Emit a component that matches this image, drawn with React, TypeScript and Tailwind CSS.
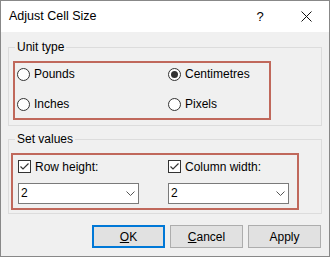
import React from 'react';

const font = { fontFamily: '"Liberation Sans", Arial, sans-serif' };

function Radio({ label, checked, wide }: { label: string; checked?: boolean; wide?: boolean }) {
    return (
        <div className={wide ? 'flex items-center h-[20px] w-[151px] shrink-0' : 'flex items-center h-[20px]'}>
            <span className="w-[13px] h-[13px] shrink-0 rounded-full border border-[#333] bg-white flex items-center justify-center">
                {checked && <span className="w-[7px] h-[7px] rounded-full bg-[#333]" />}
            </span>
            <span className="ml-[4px]">{label}</span>
        </div>
    );
}

function Check({ label }: { label: string }) {
    return (
        <div className="flex items-center h-[13px]">
            <span className="w-[13px] h-[13px] shrink-0 border border-[#333] bg-white flex items-center justify-center">
                <svg width="11" height="11" viewBox="0 0 11 11">
                    <path d="M1.5 5.5 L4 8 L9.5 2.5" fill="none" stroke="#333" strokeWidth="1.2" />
                </svg>
            </span>
            <span className="ml-[4px]">{label}</span>
        </div>
    );
}

function Combo() {
    return (
        <div className="w-[121px] h-[21px] border border-[#7a7a7a] bg-white flex items-center justify-between pl-[2px] pr-[3px] mt-[10px]">
            <span className="text-[#000] leading-none -mt-[2px]">2</span>
            <svg width="9" height="5" viewBox="0 0 9 5">
                <path d="M0.5 0.5 L4.5 4.5 L8.5 0.5" fill="none" stroke="#555" strokeWidth="1" />
            </svg>
        </div>
    );
}

export default function App() {
    return (
        <div className="w-[330px] h-[257px] border border-[#888] bg-[#f0f0f0] flex flex-col text-[12px] text-black" style={font}>
            {/* Title bar */}
            <div className="h-[31px] bg-white flex items-center justify-between">
                <span className="pl-[8px] text-[12.5px]">Adjust Cell Size</span>
                <div className="flex h-full">
                    <div className="w-[46px] h-full flex items-center justify-center text-[13px]">?</div>
                    <div className="w-[46px] h-full flex items-center justify-center">
                        <svg width="11" height="11" viewBox="0 0 11 11">
                            <path d="M0.5 0.5 L10.5 10.5 M10.5 0.5 L0.5 10.5" stroke="#111" strokeWidth="1" />
                        </svg>
                    </div>
                </div>
            </div>

            {/* Unit type */}
            <fieldset className="mx-[7px] mt-[8px] border border-[#dcdcdc]">
                <legend className="ml-[6px] px-[2px] leading-[14px]">Unit type</legend>
                <div className="ml-[4px] mt-[7px] mb-[5px] w-[258px] h-[59px] border-2 border-[#c0685b] pl-[2px] pt-[1px] flex flex-col gap-[10px]">
                    <div className="flex">
                        <Radio label="Pounds" wide />
                        <Radio label="Centimetres" checked />
                    </div>
                    <div className="flex">
                        <Radio label="Inches" wide />
                        <Radio label="Pixels" />
                    </div>
                </div>
            </fieldset>

            {/* Set values */}
            <fieldset className="mx-[7px] mt-[6px] border border-[#dcdcdc]">
                <legend className="ml-[6px] px-[2px] leading-[14px]">Set values</legend>
                <div className="ml-[2px] mt-[7px] mb-[3px] w-[288px] h-[57px] border-2 border-[#c0685b] pl-[5px] pt-[5px] flex">
                    <div className="w-[150px] shrink-0">
                        <Check label="Row height:" />
                        <Combo />
                    </div>
                    <div>
                        <Check label="Column width:" />
                        <Combo />
                    </div>
                </div>
            </fieldset>

            {/* Buttons */}
            <div className="mt-[11px] pr-[8px] flex justify-end gap-[5px]">
                <button className="w-[73px] h-[23px] border-2 border-[#0078d7] bg-[#e1e1e1]">
                    <span className="underline">O</span>K
                </button>
                <button className="w-[73px] h-[23px] border border-[#adadad] bg-[#e1e1e1]">
                    <span className="underline">C</span>ancel
                </button>
                <button className="w-[73px] h-[23px] border border-[#adadad] bg-[#e1e1e1]">Apply</button>
            </div>
        </div>
    );
}
